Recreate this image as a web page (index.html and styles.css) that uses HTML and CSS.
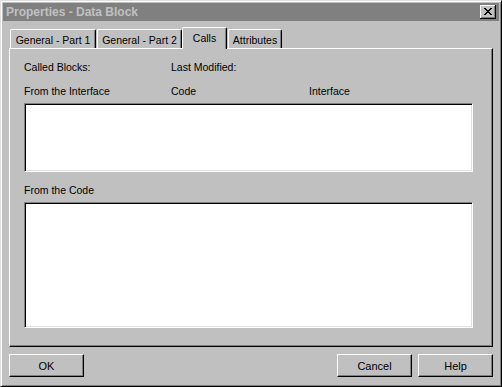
FILE: index.html
```html
<!DOCTYPE html>
<html lang="en">
   <head>
      <meta charset="UTF-8">
      <title>Properties - Data Block</title>
      <link rel="stylesheet" href="styles.css">
   </head>
   <body>
      <div class="window">
         <div class="titlebar">
            <span class="title">Properties - Data Block</span>
            <span class="close-btn">
               <svg width="8" height="7" viewBox="0 0 8 7">
                  <path d="M0 0h2v1h1v1h2v-1h1v-1h2v1h-1v1h-1v1h-1v1h1v1h1v1h1v1h-2v-1h-1v-1h-2v1h-1v1h-2v-1h1v-1h1v-1h1v-1h-1v-1h-1v-1h-1z" fill="#000"/>
               </svg>
            </span>
         </div>
         <div class="content">
            <div class="tabs">
               <div class="tab tab-general1">General - Part 1</div>
               <div class="tab tab-general2">General - Part 2</div>
               <div class="tab tab-calls active">Calls</div>
               <div class="tab tab-attributes">Attributes</div>
            </div>
            <div class="panel">
               <div class="label-row">
                  <span>Called Blocks:</span>
                  <span>Last Modified:</span>
                  <span></span>
               </div>
               <div class="label-row">
                  <span>From the Interface</span>
                  <span>Code</span>
                  <span>Interface</span>
               </div>
               <div class="listbox small"></div>
               <div class="section-label">From the Code</div>
               <div class="listbox large"></div>
            </div>
            <div class="buttons">
               <button class="btn">OK</button>
               <div class="spacer"></div>
               <button class="btn">Cancel</button>
               <button class="btn">Help</button>
            </div>
         </div>
      </div>
   </body>
</html>
```

FILE: styles.css
```css
/* dialog in the old grey look */
body {
margin: 0;
background-color: #c0c0c0;
font-family: "Liberation Sans", Arial, sans-serif;
font-size: 10.5px;
color: #000;
}
.window {
width: 502px;
height: 387px;
box-sizing: border-box;
background-color: #c0c0c0;
border-top: 1px solid #dfdfdf;
border-left: 1px solid #dfdfdf;
border-right: 1px solid #000;
border-bottom: 1px solid #000;
box-shadow: inset 1px 1px 0 #fff, inset -1px -1px 0 #808080;
padding: 2px;
display: flex;
flex-direction: column;
}
.titlebar {
height: 18px;
background-color: #808080;
display: flex;
align-items: center;
justify-content: space-between;
padding: 0 3px 0 3px;
}
.title {
color: #c0c0c0;
font-weight: bold;
font-size: 12px;
}
.close-btn {
width: 16px;
height: 14px;
box-sizing: border-box;
background-color: #c0c0c0;
border-right: 1px solid #000;
border-bottom: 1px solid #000;
box-shadow: inset 1px 1px 0 #fff, inset -1px -1px 0 #808080;
display: flex;
align-items: center;
justify-content: center;
}
.content {
flex: 1;
padding: 6px 6px 0 6px;
display: flex;
flex-direction: column;
}
.tabs {
display: flex;
align-items: flex-end;
height: 21px;
padding-left: 1px;
position: relative;
z-index: 1;
}
.tab {
height: 19px;
box-sizing: border-box;
text-align: center;
padding-top: 3px;
line-height: 15px;
border-top: 1px solid #fff;
border-left: 1px solid #fff;
border-right: 1px solid #000;
border-radius: 2px 2px 0 0;
box-shadow: inset -1px 0 0 #808080;
margin-right: 1px;
}
.tab-general1 {
width: 86px;
}
.tab-general2 {
width: 85px;
margin-right: 0;
}
.tab-calls {
width: 45px;
}
.tab-attributes {
width: 54px;
}
.tab.active {
height: 22px;
margin-bottom: -1px;
padding-top: 3px;
background-color: #c0c0c0;
}
.panel {
height: 299px;
box-sizing: border-box;
border-top: 1px solid #fff;
border-left: 1px solid #fff;
border-right: 1px solid #000;
border-bottom: 1px solid #000;
box-shadow: inset -1px -1px 0 #808080;
padding: 12px 19px 0 14px;
}
.label-row {
display: grid;
grid-template-columns: 147px 138px 1fr;
height: 13px;
line-height: 13px;
margin-bottom: 11px;
}
.section-label {
height: 13px;
line-height: 13px;
margin: 12px 0 5px 0;
}
.listbox {
background-color: #fff;
box-sizing: border-box;
border-top: 1px solid #808080;
border-left: 1px solid #808080;
border-right: 1px solid #fff;
border-bottom: 1px solid #fff;
box-shadow: inset 1px 1px 0 #000, inset -1px -1px 0 #dfdfdf;
}
.listbox.small {
height: 69px;
margin-top: -6px;
}
.listbox.large {
height: 126px;
}
.buttons {
display: flex;
margin-top: 7px;
height: 23px;
}
.spacer {
flex: 1;
}
.btn {
width: 75px;
height: 23px;
box-sizing: border-box;
background-color: #c0c0c0;
font-family: "Liberation Sans", Arial, sans-serif;
font-size: 11px;
color: #000;
padding: 0;
border-top: 1px solid #fff;
border-left: 1px solid #fff;
border-right: 1px solid #000;
border-bottom: 1px solid #000;
box-shadow: inset -1px -1px 0 #808080;
margin-left: 6px;
}
.btn:first-child {
margin-left: 0;
}
```
